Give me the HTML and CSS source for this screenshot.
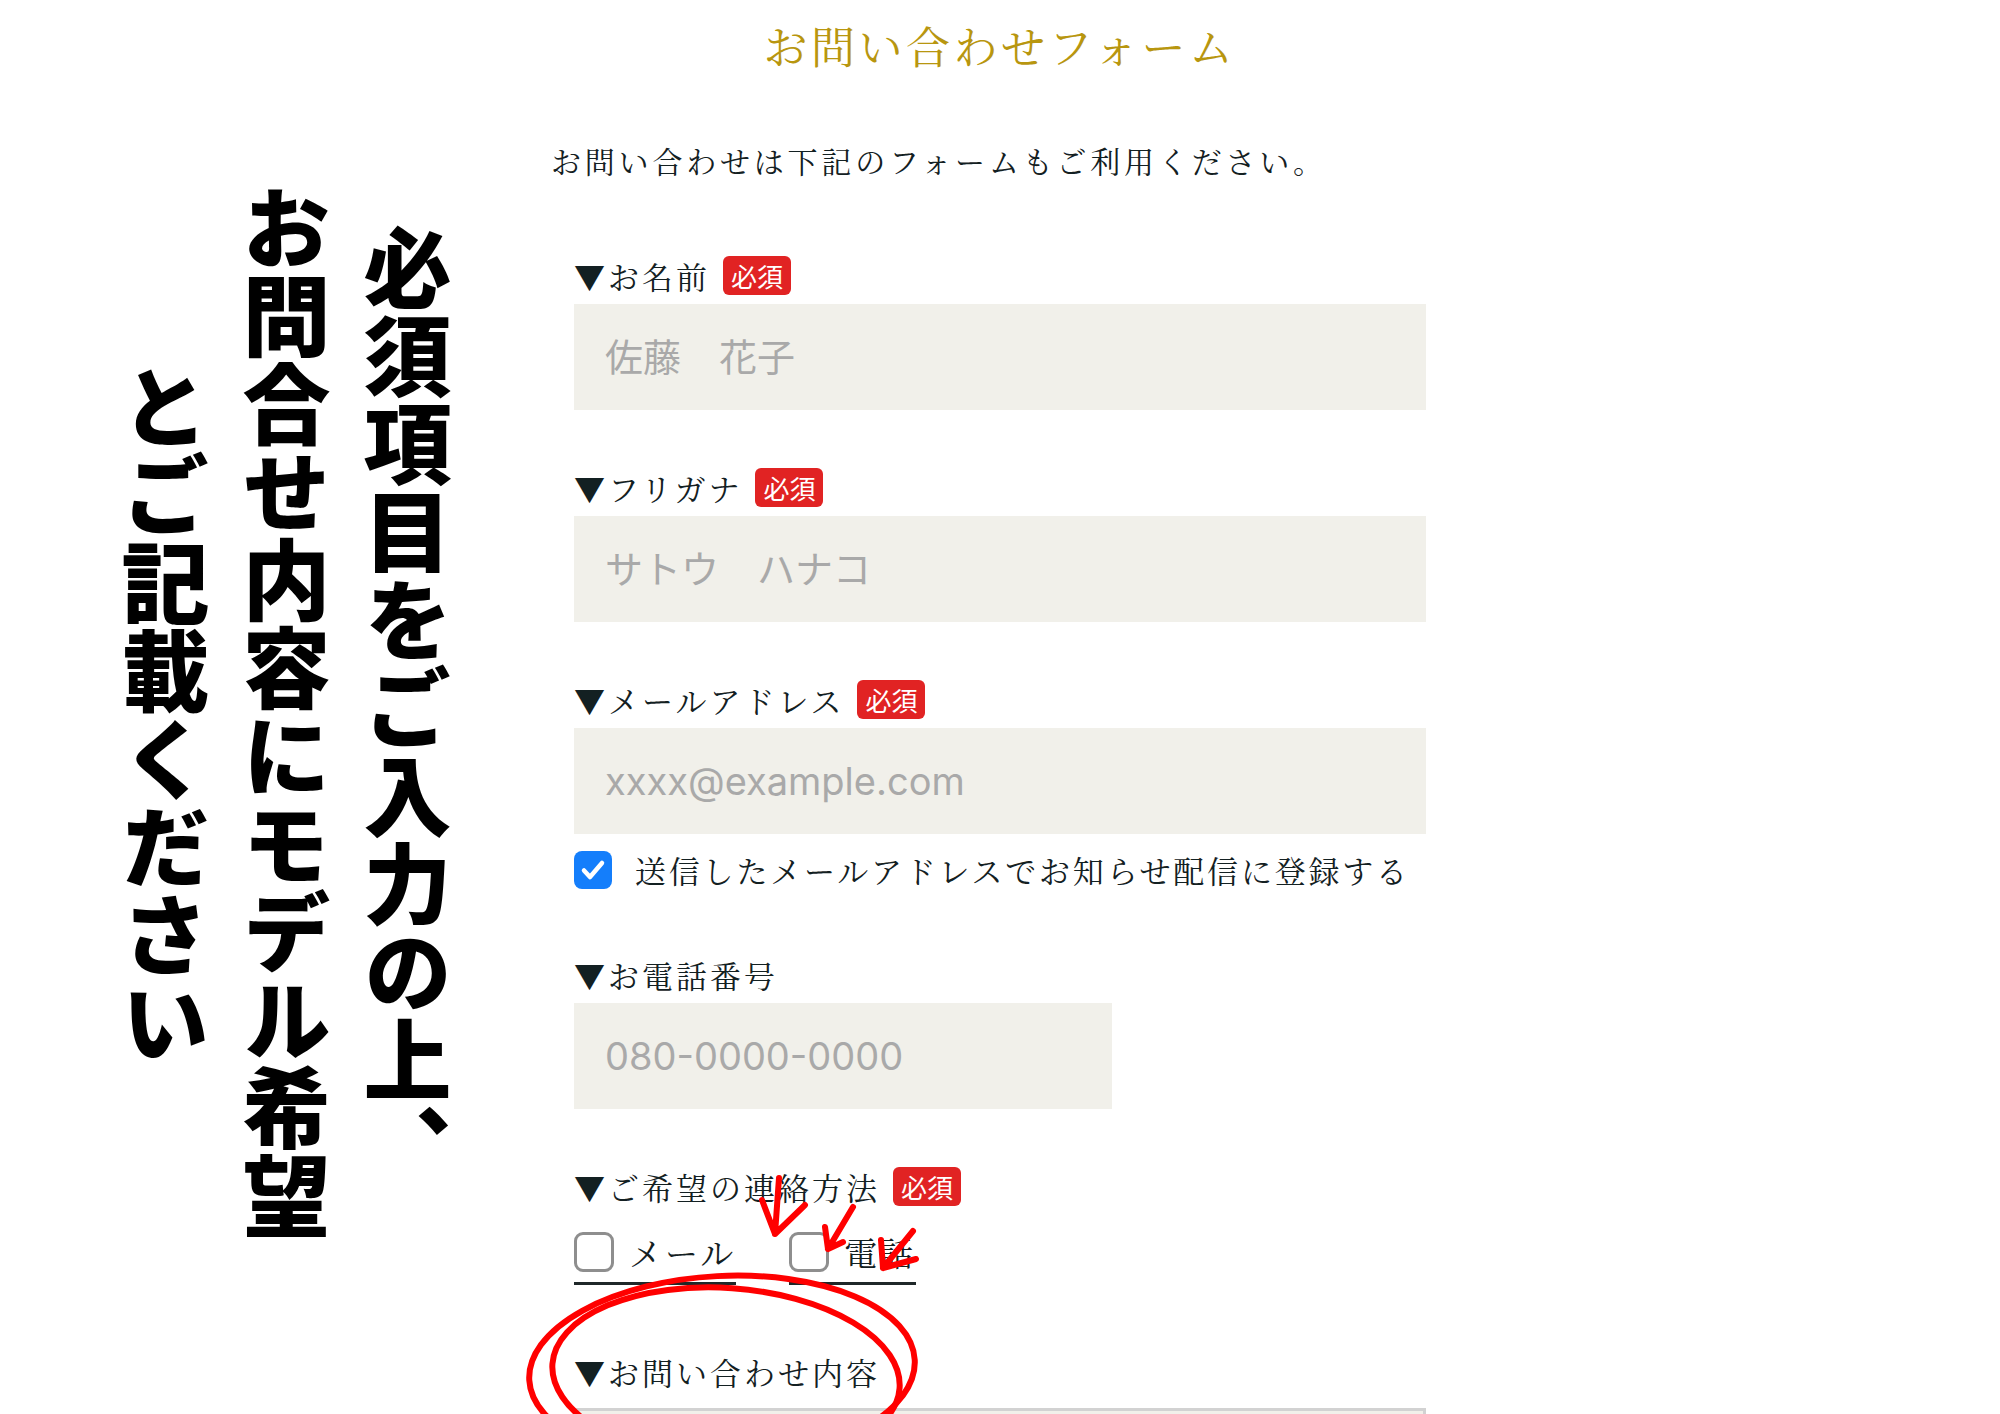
FILE: index.html
```html
<!DOCTYPE html>
<html lang="ja">
<head>
    <meta charset="UTF-8">
    <title>お問い合わせフォーム</title>
    <link rel="stylesheet" href="styles.css">
</head>
<body>

<div class="page">
    <div class="note">
        <p class="note-line note-line-1">必須項目をご入力の上、</p>
        <p class="note-line note-line-2">お問合せ内容にモデル希望</p>
        <p class="note-line note-line-3">とご記載ください</p>
    </div>

    <main class="contact">
        <h1 class="contact-title">お問い合わせフォーム</h1>
        <p class="contact-lead">お問い合わせは下記のフォームもご利用ください。</p>

        <form class="contact-form">
            <div class="field">
                <label class="field-label" for="name">▼お名前<span class="required">必須</span></label>
                <input class="field-input" id="name" type="text" placeholder="佐藤　花子">
            </div>

            <div class="field">
                <label class="field-label" for="kana">▼フリガナ<span class="required">必須</span></label>
                <input class="field-input" id="kana" type="text" placeholder="サトウ　ハナコ">
            </div>

            <div class="field field-email">
                <label class="field-label" for="email">▼メールアドレス<span class="required">必須</span></label>
                <input class="field-input" id="email" type="email" placeholder="xxxx@example.com">
                <label class="check">
                    <span class="check-box">
                        <svg width="38" height="38" viewBox="0 0 38 38"><polyline points="10,19.5 16,26 28,12" fill="none" stroke="#fff" stroke-width="4.5" stroke-linecap="round" stroke-linejoin="round"/></svg>
                    </span>
                    送信したメールアドレスでお知らせ配信に登録する
                </label>
            </div>

            <div class="field">
                <label class="field-label" for="tel">▼お電話番号</label>
                <input class="field-input field-input-short" id="tel" type="tel" placeholder="080-0000-0000">
            </div>

            <div class="field field-contact">
                <div class="field-label">▼ご希望の連絡方法<span class="required">必須</span></div>
                <div class="options">
                    <label class="option"><span class="option-box"></span>メール</label>
                    <label class="option"><span class="option-box"></span>電話</label>
                </div>
            </div>

            <div class="field field-message">
                <label class="field-label" for="message">▼お問い合わせ内容</label>
                <textarea class="field-textarea" id="message"></textarea>
            </div>
        </form>
    </main>

    <!-- 赤ペンの書き込み -->
    <svg class="marks" width="2000" height="1414" viewBox="0 0 2000 1414" fill="none" stroke="#ff0000" stroke-width="6" stroke-linecap="round" stroke-linejoin="round">
        <path d="M779 1178 L775 1234 M762 1200 L775 1234 L805 1205"/>
        <path d="M853 1207 L828 1249 M825 1227 L828 1249 L843 1242"/>
        <path d="M913 1231 L883 1268 M881 1240 L883 1268 L916 1259"/>
        <ellipse cx="722" cy="1370" rx="193" ry="94" transform="rotate(-3 722 1370)"/>
        <ellipse cx="726" cy="1376" rx="174" ry="88" transform="rotate(4 726 1376)"/>
    </svg>
</div>

</body>
</html>
```

FILE: styles.css
```css
* {
    box-sizing: border-box;
}

body {
    margin: 0;
    background: #fff;
    color: #132022;
    font-family: "Noto Serif CJK JP", "Noto Sans CJK JP", serif;
}

.page {
    position: relative;
    display: flex;
    align-items: flex-start;
    height: 1414px;
    padding-left: 104px;
    overflow: hidden;
}

/* 縦書きの注意書き */
.note {
    display: flex;
    flex-direction: row-reverse;
    flex-shrink: 0;
    width: 364px;
}

.note-line {
    width: 121px;
    margin: 0;
    writing-mode: vertical-rl;
    font-family: "Noto Sans CJK JP", sans-serif;
    font-size: 88px;
    font-weight: 900;
    line-height: 121px;
    color: #000;
}

.note-line-1 {
    margin-top: 224px;
}

.note-line-2 {
    margin-top: 184px;
}

.note-line-3 {
    margin-top: 363px;
}

/* フォーム */
.contact {
    flex-shrink: 0;
    width: 898px;
    margin-left: 83px;
}

.contact-title {
    margin: 14px 0 0;
    font-size: 44px;
    font-weight: normal;
    line-height: 62px;
    letter-spacing: 3.5px;
    text-align: center;
    color: #b8960f;
}

.contact-lead {
    margin: 64px 0 0;
    font-size: 30px;
    line-height: 40px;
    letter-spacing: 3.8px;
}

.contact-form {
    margin-top: 76px;
    padding: 0 23px;
}

.field {
    margin-bottom: 58px;
}

.field-email {
    margin-bottom: 66px;
}

.field-contact {
    margin-bottom: 67px;
}

.field-label {
    display: flex;
    align-items: center;
    height: 39px;
    margin-bottom: 9px;
    font-size: 31px;
    letter-spacing: 3px;
    white-space: nowrap;
}

.required {
    height: 39px;
    margin-left: 13px;
    padding: 0 8px;
    border-radius: 6px;
    background: #e12323;
    color: #fff;
    font-family: "Noto Sans CJK JP", sans-serif;
    font-size: 26px;
    line-height: 39px;
    letter-spacing: 0;
}

.field-input {
    display: block;
    width: 100%;
    height: 106px;
    padding: 0 31px;
    border: none;
    border-radius: 0;
    background: #f1f0ea;
    color: #333;
    font-family: Inter, "Noto Sans CJK JP", sans-serif;
    font-size: 38px;
    outline: none;
}

.field-input::placeholder {
    color: #a9a9a9;
}

.field-input-short {
    width: 538px;
}

.check {
    display: flex;
    align-items: center;
    margin-top: 17px;
    font-size: 31px;
    line-height: 38px;
    letter-spacing: 2.8px;
    white-space: nowrap;
}

.check-box {
    display: flex;
    flex-shrink: 0;
    width: 38px;
    height: 38px;
    margin-right: 23px;
    border-radius: 8px;
    background: #147efb;
}

.options {
    display: flex;
    gap: 53px;
    margin-top: 26px;
}

.option {
    display: flex;
    align-items: center;
    padding-bottom: 10px;
    border-bottom: 3px solid #1f2829;
    font-size: 33px;
    line-height: 40px;
    letter-spacing: 3px;
}

.option-box {
    width: 40px;
    height: 40px;
    margin-right: 15px;
    border: 3px solid #8e8e8e;
    border-radius: 9px;
}

.field-message .field-label {
    margin-bottom: 17px;
}

.field-textarea {
    display: block;
    width: 100%;
    height: 300px;
    border: 3px solid #d2d2d2;
    background: #f1f0ea;
    resize: none;
}

.marks {
    position: absolute;
    top: 0;
    left: 0;
    pointer-events: none;
}
```
